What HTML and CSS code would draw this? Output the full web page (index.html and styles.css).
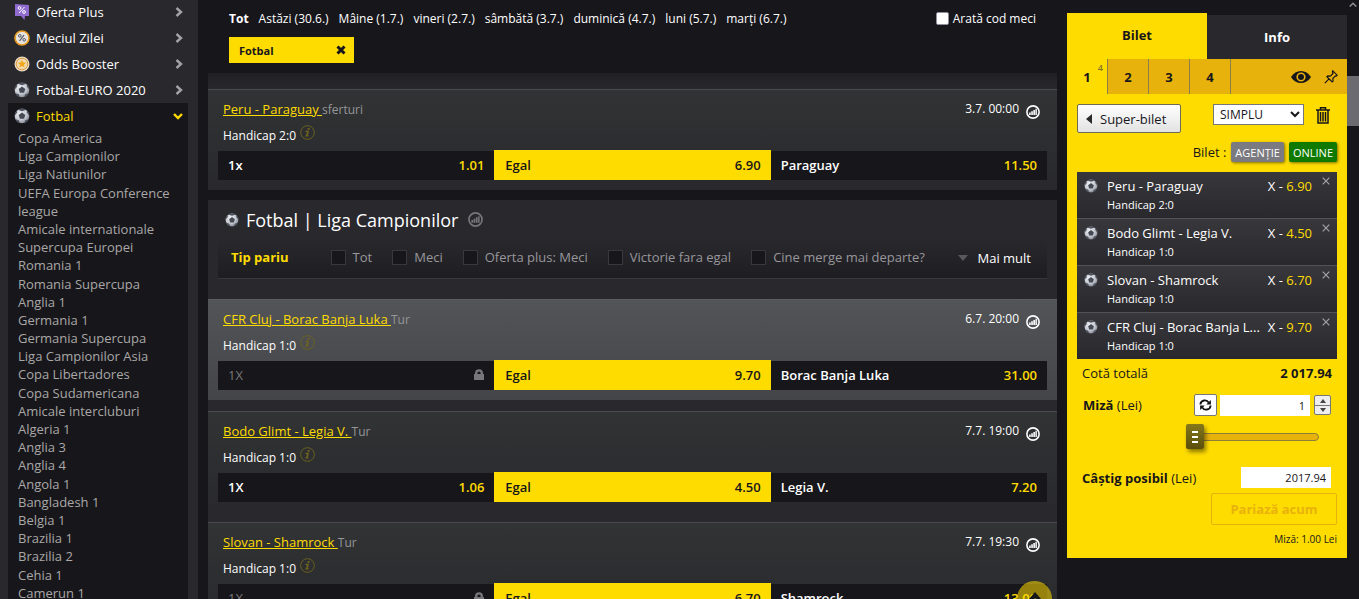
FILE: index.html
```html
<!DOCTYPE html>
<html lang="ro">
<head>
    <meta charset="UTF-8">
    <meta name="viewport" content="width=device-width, initial-scale=1.0">
    <title>Pariuri sportive - Fotbal</title>
    <link rel="stylesheet" href="styles.css">
</head>
<body>
    <svg class="sprites" aria-hidden="true">
        <defs>
            <radialGradient id="ballShade" cx="40%" cy="35%" r="70%">
                <stop offset="0" stop-color="#f4f5f8"/>
                <stop offset="0.6" stop-color="#c3c7cf"/>
                <stop offset="1" stop-color="#7d828c"/>
            </radialGradient>
            <symbol id="ball" viewBox="0 0 16 16">
                <circle cx="8" cy="8" r="7.3" fill="url(#ballShade)"/>
                <path fill="#454a55" d="M8 4.600l3.300 2.400-1.200 3.800H5.900L4.700 7z"/>
                <path fill="#4c515d" d="M4 1.800L8 3.200l4-1.400-2-1.200H6zM.6 7.800l2.600-3.200-.4-2L.8 5.500zM15.400 7.800l-2.600-3.200.4-2 2 2.900zM1.500 11.200l3.300 1 1 3-2.600-1.100zM14.500 11.200l-3.300 1-1 3 2.600-1.100z"/>
            </symbol>
            <symbol id="arrow" viewBox="0 0 8 10">
                <path d="M1.500 1l4.500 4-4.500 4" fill="none" stroke="currentColor" stroke-width="2.4"/>
            </symbol>
            <symbol id="stats" viewBox="0 0 16 16">
                <circle cx="8" cy="8" r="7" fill="none" stroke="currentColor" stroke-width="1.8"/>
                <path fill="currentColor" d="M3.6 8.6h1.8v2.8H3.6zM6 7.2h1.8v4.2H6zM8.4 5.6h1.8v5.8H8.4zM10.8 4.4h1.6v7h-1.6z"/>
            </symbol>
            <symbol id="info" viewBox="0 0 16 16">
                <circle cx="8" cy="8" r="7.3" fill="none" stroke="currentColor"/>
                <path fill="currentColor" d="M8.3 3.200h2.200l-.4 1.900H7.900zM6 6.200h3.600l-1.200 4.700h1l-.3 1.300H5.500l.3-1.300h.8l.8-3.500H5.700z"/>
            </symbol>
            <symbol id="lock" viewBox="0 0 10 12">
                <path fill="currentColor" fill-rule="evenodd" d="M0 11V5h1V4.300a4 4 0 0 1 8 0V5h1v6zM3.400 5h3.200V4a1.600 1.600 0 0 0-3.200 0z"/>
            </symbol>
            <symbol id="close" viewBox="0 0 8 8">
                <path d="M.7.700l6.600 6.600M7.300.7L.7 7.300" fill="none" stroke="currentColor" stroke-width="1.200"/>
            </symbol>
        </defs>
    </svg>

    <div class="page">
        <nav class="sidebar">
            <a href="#" class="sport">
                <svg class="sport-icon" viewBox="0 0 16 16"><path fill="#8f6bd0" d="M1 0l14 1v11h-4l-.5 4L7 12H1z"/><path d="M5 9l5.500-6" stroke="#fff"/><circle cx="5.500" cy="4" r="1.400" fill="none" stroke="#fff"/><circle cx="10" cy="8" r="1.400" fill="none" stroke="#fff"/></svg>
                <span>Oferta Plus</span>
                <svg class="sport-arrow"><use href="#arrow"/></svg>
            </a>
            <a href="#" class="sport">
                <svg class="sport-icon" viewBox="0 0 16 16"><circle cx="8" cy="8" r="7" fill="#e6e2dc" stroke="#e79a1e" stroke-width="1.600"/><path d="M5.500 11L10 5" stroke="#4c5566" stroke-width="1.200"/><circle cx="5.800" cy="5.800" r="1.300" fill="none" stroke="#4c5566"/><circle cx="10.200" cy="9.800" r="1.300" fill="none" stroke="#4c5566"/></svg>
                <span>Meciul Zilei</span>
                <svg class="sport-arrow"><use href="#arrow"/></svg>
            </a>
            <a href="#" class="sport">
                <svg class="sport-icon" viewBox="0 0 16 16"><circle cx="8" cy="8" r="7.500" fill="#e9dcc6"/><circle cx="8" cy="8" r="5.800" fill="#f0d9ae" stroke="#dd9b3c"/><path fill="#f2a71b" d="M8 3.800l1.200 2.800 3 .2-2.300 1.900.8 2.900L8 10l-2.700 1.600.8-2.900-2.300-1.900 3-.2z"/></svg>
                <span>Odds Booster</span>
                <svg class="sport-arrow"><use href="#arrow"/></svg>
            </a>
            <a href="#" class="sport">
                <svg class="sport-icon"><use href="#ball"/></svg>
                <span>Fotbal-EURO 2020</span>
                <svg class="sport-arrow"><use href="#arrow"/></svg>
            </a>
            <div class="sport-open">
                <a href="#" class="sport active">
                    <svg class="sport-icon"><use href="#ball"/></svg>
                    <span>Fotbal</span>
                    <svg class="sport-arrow down" viewBox="0 0 10 8"><path d="M1 2l4 4 4-4" fill="none" stroke="currentColor" stroke-width="2.400"/></svg>
                </a>
                <ul class="leagues">
                    <li><a href="#">Copa America</a></li>
                    <li><a href="#">Liga Campionilor</a></li>
                    <li><a href="#">Liga Natiunilor</a></li>
                    <li><a href="#">UEFA Europa Conference league</a></li>
                    <li><a href="#">Amicale internationale</a></li>
                    <li><a href="#">Supercupa Europei</a></li>
                    <li><a href="#">Romania 1</a></li>
                    <li><a href="#">Romania Supercupa</a></li>
                    <li><a href="#">Anglia 1</a></li>
                    <li><a href="#">Germania 1</a></li>
                    <li><a href="#">Germania Supercupa</a></li>
                    <li><a href="#">Liga Campionilor Asia</a></li>
                    <li><a href="#">Copa Libertadores</a></li>
                    <li><a href="#">Copa Sudamericana</a></li>
                    <li><a href="#">Amicale intercluburi</a></li>
                    <li><a href="#">Algeria 1</a></li>
                    <li><a href="#">Anglia 3</a></li>
                    <li><a href="#">Anglia 4</a></li>
                    <li><a href="#">Angola 1</a></li>
                    <li><a href="#">Bangladesh 1</a></li>
                    <li><a href="#">Belgia 1</a></li>
                    <li><a href="#">Brazilia 1</a></li>
                    <li><a href="#">Brazilia 2</a></li>
                    <li><a href="#">Cehia 1</a></li>
                    <li><a href="#">Camerun 1</a></li>
                </ul>
            </div>
        </nav>

        <main class="offer">
            <div class="dates">
                <a href="#" class="current">Tot</a>
                <a href="#">Astăzi (30.6.)</a>
                <a href="#">Mâine (1.7.)</a>
                <a href="#">vineri (2.7.)</a>
                <a href="#">sâmbătă (3.7.)</a>
                <a href="#">duminică (4.7.)</a>
                <a href="#">luni (5.7.)</a>
                <a href="#">marți (6.7.)</a>
                <label class="show-code"><input type="checkbox"> Arată cod meci</label>
            </div>
            <button class="chip">Fotbal
                <svg viewBox="0 0 10 10"><path d="M1.500 1.500l7 7M8.500 1.500l-7 7" stroke="#17161b" stroke-width="3"/></svg>
            </button>

            <section class="league league-first">
                <article class="match">
                    <div class="match-head">
                        <p><a href="#">Peru - Paraguay </a><span>sferturi</span></p>
                        <time>3.7. 00:00</time>
                        <svg class="stats"><use href="#stats"/></svg>
                    </div>
                    <div class="bet-type">Handicap 2:0 <svg><use href="#info"/></svg></div>
                    <div class="odds">
                        <button><span>1x</span><b>1.01</b></button>
                        <button class="picked"><span>Egal</span><b>6.90</b></button>
                        <button><span>Paraguay</span><b>11.50</b></button>
                    </div>
                </article>
            </section>

            <section class="league">
                <h2><svg class="title-ball"><use href="#ball"/></svg>Fotbal | Liga Campionilor<svg class="title-stats"><use href="#stats"/></svg></h2>
                <div class="filters">
                    <strong>Tip pariu</strong>
                    <label><input type="checkbox">Tot</label>
                    <label><input type="checkbox">Meci</label>
                    <label><input type="checkbox">Oferta plus: Meci</label>
                    <label><input type="checkbox">Victorie fara egal</label>
                    <label><input type="checkbox">Cine merge mai departe?</label>
                    <button class="more">Mai mult</button>
                </div>

                <article class="match highlight">
                    <div class="match-head">
                        <p><a href="#">CFR Cluj - Borac Banja Luka </a><span>Tur</span></p>
                        <time>6.7. 20:00</time>
                        <svg class="stats"><use href="#stats"/></svg>
                    </div>
                    <div class="bet-type">Handicap 1:0 <svg><use href="#info"/></svg></div>
                    <div class="odds">
                        <button class="locked"><span>1X</span><svg><use href="#lock"/></svg></button>
                        <button class="picked"><span>Egal</span><b>9.70</b></button>
                        <button><span>Borac Banja Luka</span><b>31.00</b></button>
                    </div>
                </article>

                <article class="match">
                    <div class="match-head">
                        <p><a href="#">Bodo Glimt - Legia V. </a><span>Tur</span></p>
                        <time>7.7. 19:00</time>
                        <svg class="stats"><use href="#stats"/></svg>
                    </div>
                    <div class="bet-type">Handicap 1:0 <svg><use href="#info"/></svg></div>
                    <div class="odds">
                        <button><span>1X</span><b>1.06</b></button>
                        <button class="picked"><span>Egal</span><b>4.50</b></button>
                        <button><span>Legia V.</span><b>7.20</b></button>
                    </div>
                </article>

                <article class="match">
                    <div class="match-head">
                        <p><a href="#">Slovan - Shamrock </a><span>Tur</span></p>
                        <time>7.7. 19:30</time>
                        <svg class="stats"><use href="#stats"/></svg>
                    </div>
                    <div class="bet-type">Handicap 1:0 <svg><use href="#info"/></svg></div>
                    <div class="odds">
                        <button class="locked"><span>1X</span><svg><use href="#lock"/></svg></button>
                        <button class="picked"><span>Egal</span><b>6.70</b></button>
                        <button><span>Shamrock</span><b>13.00</b></button>
                    </div>
                </article>
            </section>

            <button class="to-top" aria-label="Sus"><svg viewBox="0 0 18 12"><path d="M3 11l6-7 6 7" fill="none" stroke="#17161b" stroke-width="4"/></svg></button>
        </main>

        <aside class="slip">
            <div class="slip-tabs">
                <button class="on">Bilet</button>
                <button>Info</button>
            </div>
            <div class="slip-numbers">
                <button class="on">1<sup>4</sup></button>
                <button>2</button>
                <button>3</button>
                <button>4</button>
                <div class="slip-tools">
                    <svg class="eye" viewBox="0 0 20 12"><path fill="#17161b" fill-rule="evenodd" d="M0 6c2.500-4 6-6 10-6s7.500 2 10 6c-2.500 4-6 6-10 6S2.500 10 0 6zm10 4.600a4.600 4.600 0 1 0 0-9.200 4.600 4.600 0 0 0 0 9.200z"/><circle cx="10" cy="6" r="3" fill="#17161b"/></svg>
                    <svg class="pin" viewBox="0 0 14 14"><path d="M8.800.800l4.400 4.400-1 .9-.8-.2-2.600 2.600.3 2.600-.9.900-5.300-5.300.9-.9 2.600.3L9 3.500l-.6-1.600zM5.300 8.700L.8 13.200" fill="none" stroke="#17161b" stroke-width="1.200"/></svg>
                </div>
            </div>

            <div class="slip-body">
                <div class="slip-actions">
                    <button class="super"><svg viewBox="0 0 6 10"><path fill="#2b2b2b" d="M6 0v10L0 5z"/></svg>Super-bilet</button>
                    <select aria-label="Tip bilet"><option>SIMPLU</option></select>
                    <button class="trash" aria-label="Sterge biletul">
                        <svg viewBox="0 0 14 17"><path d="M0 3h14M4.500 2.500V.8h5v1.700M2 3v13h10V3M4.500 5v9.500M7 5v9.500M9.500 5v9.500" fill="none" stroke="#17161b" stroke-width="1.500"/></svg>
                    </button>
                </div>
                <div class="slip-place">
                    <span>Bilet :</span>
                    <button>AGENȚIE</button>
                    <button class="online">ONLINE</button>
                </div>

                <ul class="picks">
                    <li>
                        <svg class="pick-ball"><use href="#ball"/></svg>
                        <div class="pick-name">Peru - Paraguay<small>Handicap 2:0</small></div>
                        <div class="pick-odd">X - <em>6.90</em></div>
                        <button aria-label="Elimina"><svg><use href="#close"/></svg></button>
                    </li>
                    <li>
                        <svg class="pick-ball"><use href="#ball"/></svg>
                        <div class="pick-name">Bodo Glimt - Legia V.<small>Handicap 1:0</small></div>
                        <div class="pick-odd">X - <em>4.50</em></div>
                        <button aria-label="Elimina"><svg><use href="#close"/></svg></button>
                    </li>
                    <li>
                        <svg class="pick-ball"><use href="#ball"/></svg>
                        <div class="pick-name">Slovan - Shamrock<small>Handicap 1:0</small></div>
                        <div class="pick-odd">X - <em>6.70</em></div>
                        <button aria-label="Elimina"><svg><use href="#close"/></svg></button>
                    </li>
                    <li>
                        <svg class="pick-ball"><use href="#ball"/></svg>
                        <div class="pick-name">CFR Cluj - Borac Banja L...<small>Handicap 1:0</small></div>
                        <div class="pick-odd">X - <em>9.70</em></div>
                        <button aria-label="Elimina"><svg><use href="#close"/></svg></button>
                    </li>
                </ul>

                <div class="total"><span>Cotă totală</span><strong>2 017.94</strong></div>

                <div class="stake">
                    <label for="stake"><strong>Miză</strong> (Lei)</label>
                    <button class="refresh" aria-label="Reseteaza miza">
                        <svg viewBox="0 0 14 12"><path d="M1.500 5.500A4.800 4.800 0 0 1 10.500 3.500M12.500 6.500A4.800 4.800 0 0 1 3.500 8.500" fill="none" stroke="#111" stroke-width="2"/><path fill="#111" d="M12.800.500v5H7.800zM1.200 11.500v-5h5z"/></svg>
                    </button>
                    <input type="text" id="stake" value="1">
                    <div class="spinner">
                        <button aria-label="Mai mult"><svg viewBox="0 0 6 4"><path d="M0 4l3-4 3 4z"/></svg></button>
                        <button aria-label="Mai putin"><svg viewBox="0 0 6 4"><path d="M0 0l3 4 3-4z"/></svg></button>
                    </div>
                </div>
                <input type="range" class="slider" min="1" max="100" value="1" aria-label="Miză">

                <div class="win">
                    <label for="win"><strong>Câştig posibil</strong> (Lei)</label>
                    <input type="text" id="win" value="2017.94">
                </div>
                <button class="bet-now" disabled>Pariază acum</button>
                <p class="slip-note">Miză: 1.00 Lei</p>
            </div>
        </aside>

        <div class="scrollbar">
            <svg viewBox="0 0 8 5"><path d="M.7 4.500L4 1.200l3.300 3.300" fill="none" stroke="#8d8c90" stroke-width="1.500"/></svg>
            <div class="thumb"></div>
        </div>
    </div>
</body>
</html>
```

FILE: styles.css
```css
* {
    box-sizing: border-box;
}
body {
    margin: 0;
    height: 100vh;
    overflow: hidden;
    background: #17161b;
    color: #fff;
    font-family: "Open Sans", "Noto Sans", sans-serif;
    font-size: 13px;
    line-height: 18px;
}
a {
    color: inherit;
    text-decoration: none;
}
p, h2, ul {
    margin: 0;
    padding: 0;
}
ul {
    list-style: none;
}
button, input, select {
    font-family: inherit;
    font-size: 13px;
    margin: 0;
    padding: 0;
    border: 0;
}
button {
    color: inherit;
    background: none;
    cursor: pointer;
}
svg {
    display: block;
    flex: none;
}
.sprites {
    position: absolute;
    width: 0;
    height: 0;
}
.page {
    display: flex;
    gap: 10px;
    height: 100vh;
}

/* sidebar */
.sidebar {
    flex: none;
    width: 198px;
    padding: 0 10px 0 8px;
    margin-top: -1px;
    background: #29282d;
}
.sport {
    display: flex;
    align-items: center;
    gap: 6px;
    height: 26px;
    padding: 0 5px 0 6px;
}
.sport span {
    flex: 1;
}
.sport-icon {
    width: 16px;
    height: 16px;
}
.sport-arrow {
    width: 8px;
    height: 10px;
    color: #a3a2a6;
}
.sport-arrow.down {
    width: 10px;
    height: 8px;
}
.sport-open {
    background: #17161b;
}
.sport.active, .sport.active .sport-arrow {
    color: #ffdc00;
}
.leagues {
    padding: 0 10px;
    color: #a9a8a6;
    line-height: 1.4;
}

/* offer */
.offer {
    flex: 1;
    min-width: 0;
}
.dates {
    display: flex;
    align-items: center;
    gap: 10px;
    height: 37px;
    padding: 0 21px;
    font-size: 12px;
}
.dates .current {
    font-weight: 700;
}
.show-code {
    display: flex;
    align-items: center;
    gap: 4px;
    margin-left: auto;
}
.show-code input {
    appearance: none;
    width: 13px;
    height: 13px;
    background: #fff;
    border: 1px solid #8f8f9d;
    border-radius: 2px;
}
.chip {
    display: flex;
    align-items: center;
    justify-content: space-between;
    width: 125px;
    height: 26px;
    margin: 0 21px 10px;
    padding: 0 8px 0 10px;
    background: #ffdc00;
    color: #17161b;
    font-size: 11px;
    font-weight: 700;
}
.chip svg {
    width: 10px;
    height: 10px;
}
.league {
    margin-bottom: 10px;
    background: #29282d;
}
.league-first {
    padding-top: 16px;
    background: linear-gradient(#212025, #29282d 16px);
}
.league h2 {
    display: flex;
    align-items: center;
    height: 39px;
    padding: 0 17px;
    font-size: 18px;
    font-weight: 400;
}
.title-ball {
    width: 14px;
    height: 14px;
    margin-right: 7px;
}
.title-stats {
    width: 15px;
    height: 15px;
    margin-left: 10px;
    color: #77767a;
}
.filters {
    display: flex;
    align-items: center;
    height: 40px;
    margin: 0 10px 20px;
    padding: 0 16px 3px 13px;
    border-bottom: 1px solid #39383d;
    background: linear-gradient(#29282d, #1e1d22);
    color: #98979b;
}
.filters strong {
    margin-right: 42px;
    color: #ffdc00;
}
.filters label {
    display: flex;
    align-items: center;
    gap: 7px;
    margin-right: 20px;
}
.filters input {
    appearance: none;
    width: 15px;
    height: 15px;
    background: #17161b;
    border: 1px solid #39383d;
}
.more {
    display: flex;
    align-items: center;
    gap: 10px;
    margin-left: auto;
    padding-top: 2px;
    color: #fff;
}
.more::before {
    content: "";
    border: 5px solid transparent;
    border-top: 6px solid #59585d;
    border-bottom: 0;
}
.match {
    margin-bottom: 10px;
    padding: 9px 10px 10px;
    border-top: 1px solid #4a494e;
    background: linear-gradient(#313334, #29292d);
}
.highlight {
    border-top-color: #5b5c5f;
    border-bottom: 1px solid #29282d;
    background: linear-gradient(#525457, #434548);
}
.match-head {
    display: flex;
    align-items: center;
    height: 20px;
    padding: 0 7px 0 5px;
}
.match-head p {
    flex: 1;
}
.match-head p a {
    color: #ffdc00;
    text-decoration: underline;
    white-space: pre;
}
.match-head p span {
    color: #96969a;
    font-size: 12px;
}
.match-head time {
    font-size: 12px;
}
.stats {
    width: 14px;
    height: 14px;
    margin: 6px 0 0 7px;
}
.bet-type {
    display: flex;
    align-items: center;
    gap: 4px;
    height: 31px;
    padding: 3px 5px 0;
    font-size: 12px;
}
.bet-type svg {
    width: 15px;
    height: 15px;
    margin-bottom: 7px;
    color: #6e641c;
}
.odds {
    display: grid;
    grid-template-columns: 1fr 1fr 1fr;
    align-items: end;
}
.odds button {
    display: flex;
    align-items: center;
    justify-content: space-between;
    height: 29px;
    padding: 0 10px 1px;
    background: #17161b;
    font-weight: 600;
}
.odds b {
    color: #ffdc00;
    font-weight: 600;
}
.odds .picked {
    height: 30px;
    padding: 0 10px 0 11px;
    background: #ffdc00;
}
.odds .picked, .odds .picked b {
    color: #17161b;
}
.odds .locked {
    color: #77767a;
    font-weight: 400;
}
.odds .locked svg {
    width: 10px;
    height: 12px;
}
.to-top {
    position: absolute;
    right: 307px;
    bottom: -17px;
    display: flex;
    justify-content: center;
    width: 35px;
    height: 35px;
    padding-top: 10px;
    border-radius: 50%;
    background: rgba(255, 220, 0, 0.55);
}
.to-top svg {
    width: 18px;
    height: 12px;
}

/* bet slip */
.slip {
    flex: none;
    align-self: flex-start;
    width: 280px;
    margin-top: 13px;
    background: #ffdc00;
    color: #17161b;
}
.slip-tabs {
    display: flex;
    align-items: flex-end;
    background: #17161b;
}
.slip-tabs button {
    flex: 1;
    height: 44px;
    background: #29282d;
    color: #fff;
    font-weight: 700;
}
.slip-tabs .on {
    height: 46px;
    padding-bottom: 2px;
    background: #ffdc00;
    color: #17161b;
}
.slip-numbers {
    display: flex;
    height: 35px;
    background: #e8b20c;
}
.slip-numbers button {
    width: 41px;
    border-left: 1px solid #8d7f4a;
    font-weight: 700;
}
.slip-numbers .on {
    position: relative;
    width: 40px;
    border: 0;
    background: #ffdc00;
}
.slip-numbers sup {
    position: absolute;
    top: 4px;
    right: 4px;
    color: #857622;
    font-size: 9px;
    font-weight: 600;
    line-height: 10px;
}
.slip-tools {
    flex: 1;
    display: flex;
    align-items: center;
    justify-content: flex-end;
    gap: 13px;
    padding-right: 9px;
    border-left: 1px solid #8d7f4a;
}
.eye {
    width: 20px;
    height: 12px;
}
.pin {
    width: 14px;
    height: 14px;
}
.slip-body {
    padding: 10px;
}
.slip-actions {
    display: flex;
    align-items: flex-start;
    height: 38px;
}
.super {
    display: flex;
    align-items: center;
    gap: 8px;
    height: 29px;
    margin-right: auto;
    padding: 0 14px 0 8px;
    border: 1px solid #6e6a55;
    border-radius: 2px;
    background: linear-gradient(#fff, #e2e2e2);
}
.super svg {
    width: 6px;
    height: 10px;
}
.slip-actions select {
    width: 91px;
    height: 21px;
    margin-right: 12px;
    padding-left: 2px;
    border: 1px solid #77767a;
    background: #fff;
    color: #17161b;
    font-size: 12px;
}
.trash {
    margin: 3px 7px 0 0;
}
.trash svg {
    width: 14px;
    height: 17px;
}
.slip-place {
    display: flex;
    align-items: center;
    justify-content: flex-end;
    gap: 5px;
    margin-bottom: 10px;
}
.slip-place button {
    height: 20px;
    padding: 0 4px;
    border-radius: 2px;
    background: #7b7a80;
    box-shadow: 1px 1px 3px rgba(0, 0, 0, 0.5);
    color: #fff;
    font-size: 11px;
}
.slip-place .online {
    background: #107a00;
}
.picks {
    color: #fff;
}
.picks li {
    display: flex;
    align-items: flex-start;
    height: 47px;
    padding: 5px 7px 0;
    border-bottom: 1px solid #535257;
    background: linear-gradient(#38373c, #29282d);
}
.picks li:last-child {
    height: 46px;
    border-bottom: 0;
}
.pick-ball {
    width: 14px;
    height: 14px;
    margin: 2px 9px 0 0;
}
.pick-name {
    flex: 1;
    overflow: hidden;
    white-space: nowrap;
}
.pick-name small {
    display: block;
    padding-top: 1px;
    font-size: 11px;
}
.pick-odd {
    margin: 0 10px 0 6px;
}
.pick-odd em {
    color: #ffdc00;
    font-style: normal;
}
.picks button svg {
    width: 8px;
    height: 8px;
    color: #a3a2a6;
}
.total {
    display: flex;
    justify-content: space-between;
    align-items: center;
    height: 27px;
    padding: 0 5px;
}
.stake {
    display: flex;
    align-items: center;
    height: 38px;
    padding: 0 6px;
}
.stake label, .win label {
    flex: 1;
}
.refresh {
    display: flex;
    align-items: center;
    justify-content: center;
    width: 23px;
    height: 22px;
    margin-right: 3px;
    border: 1px solid #77767a;
    border-radius: 2px;
    background: #fff;
}
.refresh svg {
    width: 13px;
    height: 12px;
}
.stake input, .win input {
    width: 90px;
    height: 21px;
    padding: 0 5px;
    background: #fff;
    color: #17161b;
    font-size: 11px;
    text-align: right;
}
.spinner {
    display: flex;
    flex-direction: column;
    width: 17px;
    margin-left: 4px;
    border: 1px solid #77767a;
    border-radius: 2px;
    background: #eee;
}
.spinner button {
    display: flex;
    align-items: center;
    justify-content: center;
    height: 9px;
}
.spinner button + button {
    border-top: 1px solid #77767a;
}
.spinner svg {
    width: 6px;
    height: 4px;
    fill: #444;
}
.slider {
    appearance: none;
    display: block;
    width: 133px;
    height: 26px;
    margin: 0 18px 17px auto;
    background: none;
}
.slider::-webkit-slider-runnable-track {
    height: 8px;
    border: 1px solid #8d7f3a;
    border-radius: 4px;
    background: #e8b20c;
}
.slider::-webkit-slider-thumb {
    appearance: none;
    width: 18px;
    height: 25px;
    margin: -10px 0 0 -1px;
    border-radius: 2px;
    background:
        linear-gradient(#fff 0 2px, transparent 2px 5px, #fff 5px 7px, transparent 7px 10px, #fff 10px 12px) center / 6px 12px no-repeat,
        linear-gradient(#85781a, #5a4e0c);
    box-shadow: 2px 3px 4px rgba(0, 0, 0, 0.45);
}
.win {
    display: flex;
    align-items: center;
    height: 21px;
    margin-bottom: 5px;
    padding: 0 6px 0 5px;
}
.bet-now {
    display: block;
    width: 126px;
    height: 32px;
    margin-left: auto;
    border: 1px solid #e8b20c;
    border-radius: 2px;
    color: #e8b20c;
    font-weight: 700;
}
.slip-note {
    padding-top: 6px;
    font-size: 10px;
    line-height: 17px;
    text-align: right;
}

/* scrollbar */
.scrollbar {
    flex: none;
    width: 12px;
    margin-left: -10px;
}
.scrollbar svg {
    width: 8px;
    height: 5px;
    margin: 2px 2px 69px;
}
.thumb {
    height: 50px;
    background: #6c6b70;
}
```
